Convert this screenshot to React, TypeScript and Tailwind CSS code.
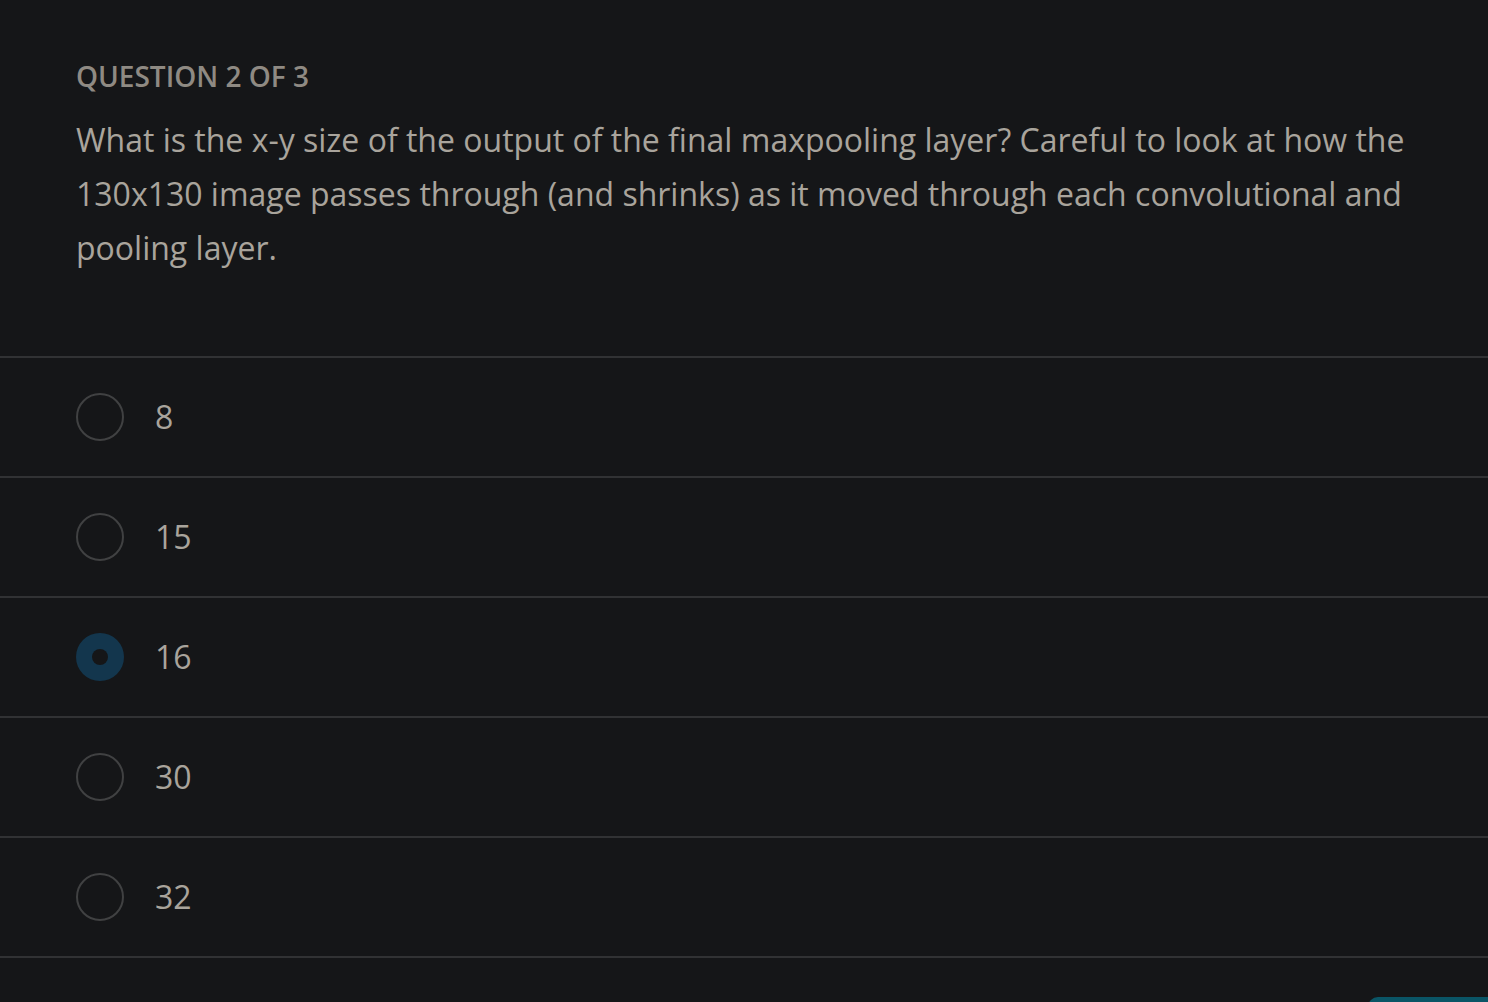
const options = ['8', '15', '16', '30', '32'];

function Radio({ checked }: { checked: boolean }) {
  if (checked) {
    return (
      <span className="flex h-12 w-12 shrink-0 items-center justify-center rounded-full bg-[#13364d]">
        <span className="h-4 w-4 rounded-full bg-[#151618]" />
      </span>
    );
  }
  return <span className="h-12 w-12 shrink-0 rounded-full border-2 border-[#404142]" />;
}

export default function App() {
  const selected = '16';

  return (
    <div
      className="h-[1002px] overflow-hidden bg-[#151618] text-[#a9a49c]"
      style={{ fontFamily: '"Open Sans", "Noto Sans", sans-serif' }}
    >
      <div className="px-[76px] pt-[55px] pb-[81px]">
        <p className="text-[28px] leading-[42px] font-semibold text-[#8f8a83]">QUESTION 2 OF 3</p>
        <p className="mt-4 text-[32px] leading-[54px]">
          What is the x-y size of the output of the final maxpooling layer? Careful to look at how the 130x130 image
          passes through (and shrinks) as it moved through each convolutional and pooling layer.
        </p>
      </div>

      <div className="border-t-2 border-[#313234]">
        {options.map((opt) => (
          <label
            key={opt}
            className="flex h-[120px] cursor-pointer items-center gap-[31px] border-b-2 border-[#313234] px-[76px]"
          >
            <Radio checked={opt === selected} />
            <span className="text-[32px] leading-none">{opt}</span>
          </label>
        ))}
      </div>

      <div className="mt-[39px] flex justify-end">
        <button className="h-[40px] w-[120px] rounded-tl-[10px] bg-[#0a5566]" />
      </div>
    </div>
  );
}
